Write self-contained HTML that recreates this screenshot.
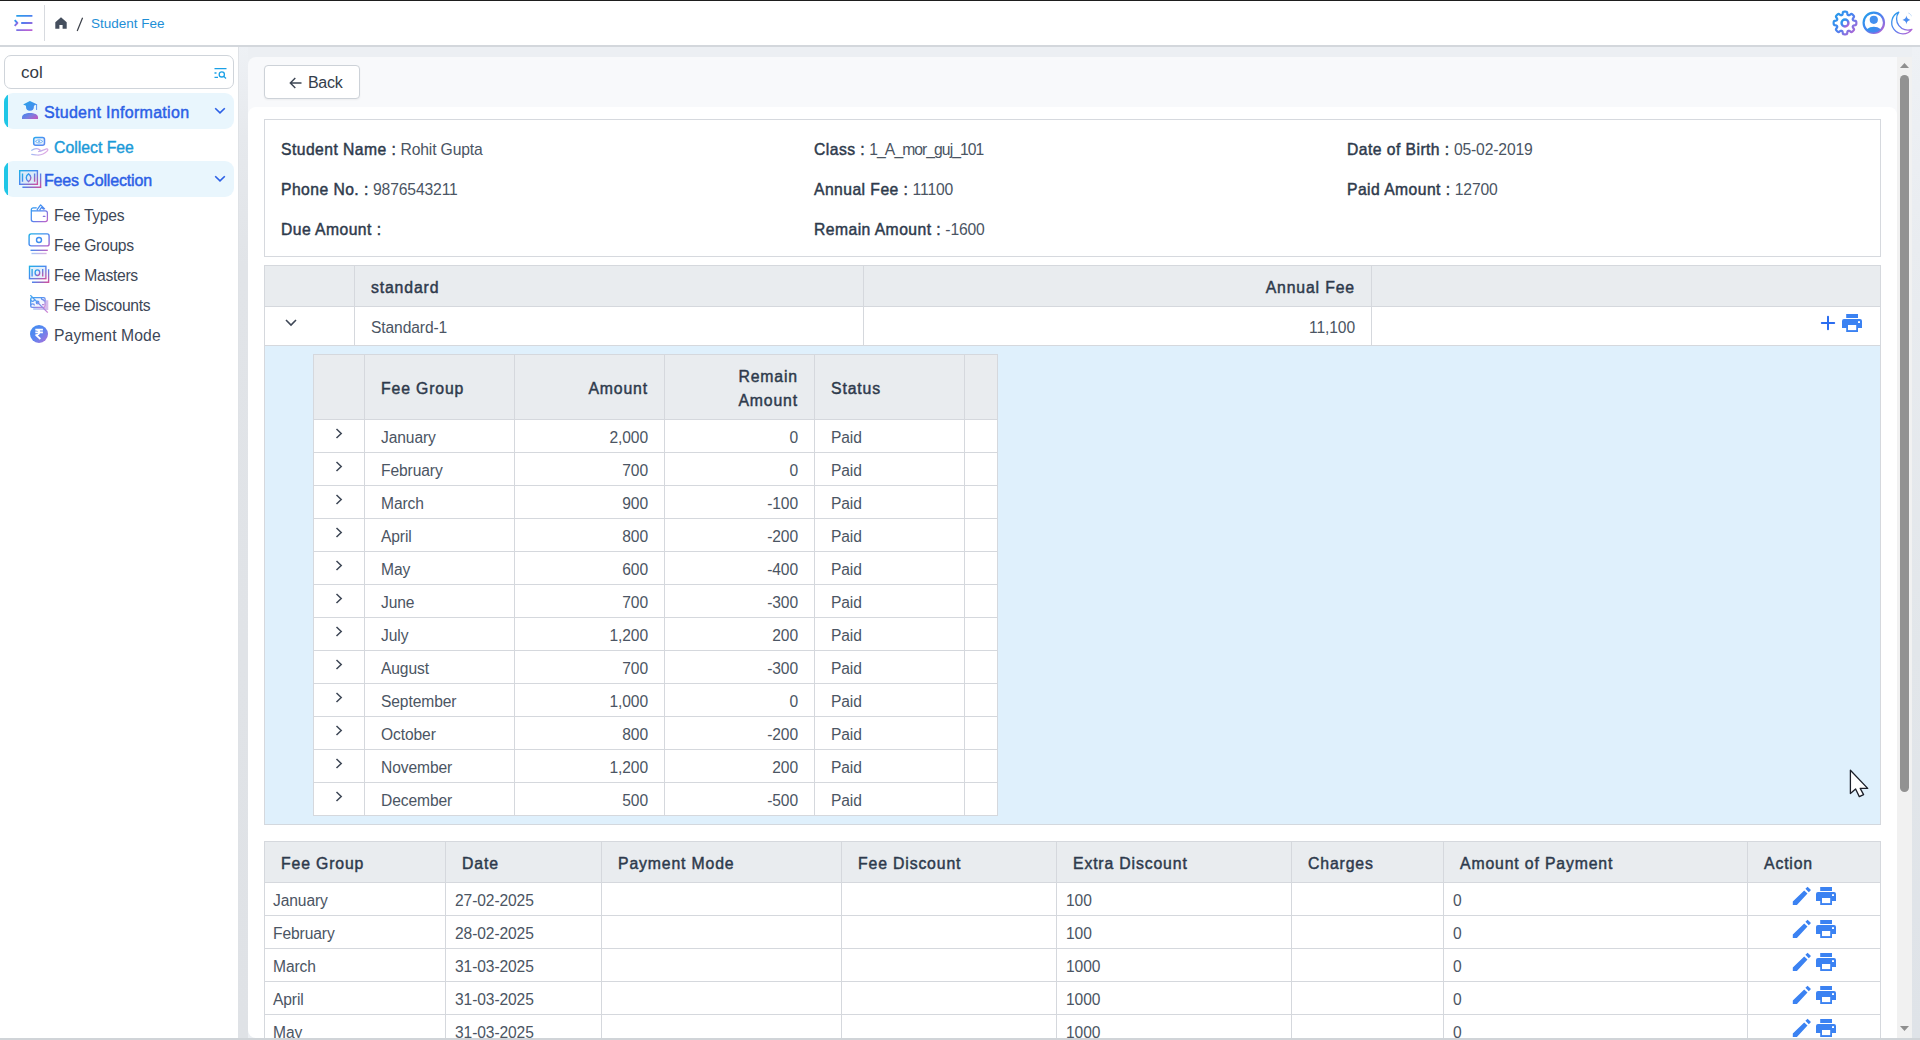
<!DOCTYPE html><html><head><meta charset="utf-8"><style>
*{box-sizing:border-box;margin:0;padding:0}
html,body{width:1920px;height:1040px;overflow:hidden;background:#eceff3;font-family:"Liberation Sans",sans-serif;color:#4b5563;font-size:15px}
.a{position:absolute}
svg{display:block}
#topline{left:0;top:0;width:1920px;height:1px;background:#1e1e1e}
#header{left:0;top:1px;width:1920px;height:44px;background:#fff}
#hborder{left:0;top:45px;width:1920px;height:2px;background:#d3d7dc}
#sidebar{left:0;top:47px;width:238px;height:993px;background:#fff}
#sbline{left:238px;top:47px;width:1px;height:993px;background:#dfe2e6}
#sbshadow{left:239px;top:47px;width:9px;height:993px;background:linear-gradient(180deg,#eef1f5 0px,#e6e9ed 90px,#e1e4e8 220px,#dfe2e6 993px)}
#bottomline{left:0;top:1038px;width:1920px;height:2px;background:#d0d4d8}
.cardhead{left:248px;top:57px;width:1649px;height:60px;background:#f8f9fb;border-radius:8px 0 0 0}
.cardbody{left:248px;top:107px;width:1649px;height:931px;background:#fff;border-radius:8px 8px 0 8px}
.btn{left:264px;top:65px;width:96px;height:34px;border:1px solid #cdd2d8;border-radius:4px;background:#fff;box-shadow:0 1px 2px rgba(0,0,0,.05);font-size:15px;color:#343d4b}
#scroll{left:1897px;top:57px;width:15px;height:981px;background:#f1f1f1}
#thumb{left:3px;top:18px;width:9px;height:717px;background:#929292;border-radius:5px}
#rbg{left:1912px;top:47px;width:8px;height:991px;background:linear-gradient(180deg,#eef1f5 0px,#e9ecf0 200px,#e2e6ea 600px,#dfe3e8 991px)}
.search{left:4px;top:55px;width:230px;height:34px;border:1px solid #cfd4da;border-radius:7px;background:#fff}
.search span{position:absolute;left:16px;top:8px;font-size:17px;line-height:18px;color:#343a44}
.mi{left:4px;width:230px;height:36px;background:#e9f6fd;border-radius:9px;overflow:hidden}
.mi .bar{position:absolute;left:0;top:0;width:4px;height:36px;background:#1fc6e6}
.mt{font-weight:400;-webkit-text-stroke:0.45px #2c60e6;font-size:16px;letter-spacing:0.3px;color:#2c60e6;white-space:nowrap;line-height:18px}
.st{font-size:15.7px;letter-spacing:-0.3px;color:#3d4757;white-space:nowrap;line-height:18px}
.info{left:264px;top:119px;width:1617px;height:138px;border:1px solid #d6d9de;background:#fff}
.kv{white-space:nowrap;font-size:15.7px;letter-spacing:-0.15px;line-height:18px}
.kv b{font-weight:400;-webkit-text-stroke:0.45px #2e3a4c;color:#2e3a4c;letter-spacing:0.45px}
.kv span{color:#4b5563}
table{border-collapse:collapse;table-layout:fixed;position:absolute}
td,th{border:1px solid #d5d8dd;white-space:nowrap;overflow:hidden;font-size:15px}
td{font-size:15.6px;letter-spacing:-0.1px;padding-top:3px}
td{background:#fff;color:#4b5563}
th{background:#e9ecef;font-weight:400;-webkit-text-stroke:0.45px #2e3a4c;color:#2e3a4c;letter-spacing:.85px;text-align:left;font-size:15.8px;padding-top:3px}
.rt{text-align:right}
</style></head><body>
<div id="topline" class="a"></div><div id="header" class="a"></div><div id="hborder" class="a"></div>
<div id="sidebar" class="a"></div><div id="sbline" class="a"></div><div id="sbshadow" class="a"></div>
<div id="rbg" class="a"></div>
<div class="cardhead a"></div><div class="cardbody a"></div>
<div class="a" style="left:14px;top:15px"><svg width="19" height="16" viewBox="0 0 19 16"><defs><linearGradient id="gh" x1="0" y1="0" x2="0.7" y2="1"><stop offset="0" stop-color="#2aa0ea"/><stop offset=".5" stop-color="#4f7df0"/><stop offset="1" stop-color="#b662d6"/></linearGradient></defs>
<g fill="none" stroke="url(#gh)" stroke-width="1.9"><path d="M2.3 0.9 H18.4 M7.2 8 H18.4 M2.3 15.1 H18.4"/><path d="M0.7 5.2 L3.4 8 L0.7 10.8" stroke-linejoin="round"/></g></svg></div>
<div class="a" style="left:44px;top:5px;width:1px;height:36px;background:#d7dadf"></div>
<div class="a" style="left:55px;top:17px"><svg width="12" height="12" viewBox="0 0 12 12"><path d="M6 0.3 L11.7 5.2 V11.7 H7.6 V8 H4.4 V11.7 H0.3 V5.2Z" fill="#454f5e"/></svg></div>
<div class="a" style="left:76px;top:17px"><svg width="8" height="15" viewBox="0 0 8 15"><path d="M6.6 0.8 L1.2 14" stroke="#3a3f48" stroke-width="1.2"/></svg></div>
<div class="a" style="left:91px;top:15px;font-size:13.5px;color:#1e8ed6;line-height:18px">Student Fee</div>
<div class="a" style="left:1832px;top:10px"><svg width="26" height="26" viewBox="0 0 26 26"><defs><linearGradient id="gst" x1="0" y1="0" x2="1" y2="1"><stop offset="0" stop-color="#1ea0ea"/><stop offset=".5" stop-color="#4b82f0"/><stop offset="1" stop-color="#c35fd0"/></linearGradient></defs>
<g fill="none" stroke="url(#gst)" stroke-width="2.2" stroke-linejoin="round"><path d="M13.00 1.65 L13.59 1.67 L14.18 1.73 L14.76 1.92 L15.20 2.67 L15.39 4.09 L15.68 4.77 L16.06 5.03 L16.47 5.20 L16.93 5.29 L17.61 5.01 L18.75 4.14 L19.60 3.92 L20.13 4.19 L20.59 4.57 L21.03 4.97 L21.43 5.41 L21.81 5.87 L22.08 6.40 L21.86 7.25 L20.99 8.39 L20.71 9.07 L20.80 9.53 L20.97 9.94 L21.23 10.32 L21.91 10.61 L23.33 10.80 L24.08 11.24 L24.27 11.82 L24.33 12.41 L24.35 13.00 L24.33 13.59 L24.27 14.18 L24.08 14.76 L23.33 15.20 L21.91 15.39 L21.23 15.68 L20.97 16.06 L20.80 16.47 L20.71 16.93 L20.99 17.61 L21.86 18.75 L22.08 19.60 L21.81 20.13 L21.43 20.59 L21.03 21.03 L20.59 21.43 L20.13 21.81 L19.60 22.08 L18.75 21.86 L17.61 20.99 L16.93 20.71 L16.47 20.80 L16.06 20.97 L15.68 21.23 L15.39 21.91 L15.20 23.33 L14.76 24.08 L14.18 24.27 L13.59 24.33 L13.00 24.35 L12.41 24.33 L11.82 24.27 L11.24 24.08 L10.80 23.33 L10.61 21.91 L10.32 21.23 L9.94 20.97 L9.53 20.80 L9.07 20.71 L8.39 20.99 L7.25 21.86 L6.40 22.08 L5.87 21.81 L5.41 21.43 L4.97 21.03 L4.57 20.59 L4.19 20.13 L3.92 19.60 L4.14 18.75 L5.01 17.61 L5.29 16.93 L5.20 16.47 L5.03 16.06 L4.77 15.68 L4.09 15.39 L2.67 15.20 L1.92 14.76 L1.73 14.18 L1.67 13.59 L1.65 13.00 L1.67 12.41 L1.73 11.82 L1.92 11.24 L2.67 10.80 L4.09 10.61 L4.77 10.32 L5.03 9.94 L5.20 9.53 L5.29 9.07 L5.01 8.39 L4.14 7.25 L3.92 6.40 L4.19 5.87 L4.57 5.41 L4.97 4.97 L5.41 4.57 L5.87 4.19 L6.40 3.92 L7.25 4.14 L8.39 5.01 L9.07 5.29 L9.53 5.20 L9.94 5.03 L10.32 4.77 L10.61 4.09 L10.80 2.67 L11.24 1.92 L11.82 1.73 L12.41 1.67 L13.00 1.65Z"/><circle cx="13" cy="13" r="3.45" stroke-width="2.4"/></g></svg></div>
<div class="a" style="left:1862px;top:11px"><svg width="24" height="24" viewBox="0 0 24 24"><defs><linearGradient id="gu" x1="0" y1="0" x2="1" y2="1"><stop offset="0" stop-color="#1ea0ea"/><stop offset=".5" stop-color="#4b82f0"/><stop offset="1" stop-color="#c35fd0"/></linearGradient></defs>
<defs><clipPath id="cu"><circle cx="11.8" cy="11.8" r="10"/></clipPath></defs>
<circle cx="11.8" cy="11.8" r="10.2" fill="none" stroke="url(#gu)" stroke-width="2.2"/><circle cx="11.8" cy="8.85" r="4.1" fill="#4390ef"/><ellipse cx="11.8" cy="23.2" rx="9.5" ry="7.4" fill="url(#gu)" clip-path="url(#cu)"/></svg></div>
<div class="a" style="left:1889px;top:11px"><svg width="24" height="24" viewBox="0 0 24 24"><defs><linearGradient id="gmo" x1="0" y1="0" x2="1" y2="1"><stop offset="0" stop-color="#1ea0ea"/><stop offset=".5" stop-color="#5a7ff0"/><stop offset="1" stop-color="#c35fd0"/></linearGradient></defs>
<path d="M9.8 1.2 A11.2 11.2 0 1 0 22.9 18.3 A11.2 11.2 0 0 1 9.8 1.2Z" fill="none" stroke="url(#gmo)" stroke-width="1.3" stroke-linejoin="round"/>
<path d="M17.4 4.6 Q17.9 8.4 21.4 8.9 Q17.9 9.4 17.4 13.2 Q16.9 9.4 13.4 8.9 Q16.9 8.4 17.4 4.6Z" fill="#4a8cf0"/><path d="M19.6 2.2 A4.5 4.5 0 0 1 22.6 5.6" fill="none" stroke="#8fc0f4" stroke-width="0.9" stroke-dasharray="1.2 1"/></svg></div>
<div class="search a"><span>col</span><div class="a" style="left:209px;top:12px"><svg width="13" height="11" viewBox="0 0 13 11"><g fill="none" stroke="#1aa0e6" stroke-width="1.3"><path d="M0.5 0.7 H12.5 M0.5 5 H2.5 M0.5 9.4 H4"/><circle cx="7.8" cy="6.4" r="2.6"/><path d="M9.8 8.4 L12 10.5"/></g></svg></div></div>
<div class="mi a" style="top:93px"><div class="bar"></div><div class="a" style="left:18px;top:8px"><svg width="17" height="19" viewBox="0 0 17 19"><defs><linearGradient id="gs" x1="0" y1="0" x2="1" y2="1"><stop offset="0" stop-color="#2aa3e8"/><stop offset="1" stop-color="#4f86f0"/></linearGradient><linearGradient id="gs2" x1="0" y1="0" x2="1" y2="0.6"><stop offset="0" stop-color="#3d85f0"/><stop offset=".6" stop-color="#7a7ee0"/><stop offset="1" stop-color="#b45ec5"/></linearGradient></defs>
<path d="M7.9 0 L14.9 3.3 L11.9 4.8 V5.8 A3.95 3.95 0 0 1 4 5.8 V4.8 L1.1 3.5Z" fill="url(#gs)"/><path d="M14.6 3.4 V8.6" stroke="#4a8af0" stroke-width="0.9" stroke-linecap="round"/>
<path d="M0 18 V16.2 C0 13.6 3.6 12 8 12 C12.4 12 16 13.6 16 16.2 V18Z" fill="url(#gs2)"/></svg></div><div class="a mt" style="left:40px;top:11px">Student Information</div><div class="a" style="left:210px;top:14px"><svg width="12" height="8" viewBox="0 0 12 8"><path d="M1.2 1.2 L6 5.9 L10.8 1.2" fill="none" stroke="#2c60e6" stroke-width="1.6"/></svg></div></div>
<div class="a" style="left:31px;top:136px"><svg width="18" height="20" viewBox="0 0 18 20"><defs><linearGradient id="gc" x1="0" y1="0" x2="1" y2="1"><stop offset="0" stop-color="#2aa8ee"/><stop offset=".5" stop-color="#4f8ef2"/><stop offset="1" stop-color="#5f8cf0"/></linearGradient></defs><defs><linearGradient id="gc2" x1="0" y1="0" x2="1" y2="0.3"><stop offset="0" stop-color="#8fc3f6"/><stop offset=".5" stop-color="#b9b3ee"/><stop offset="1" stop-color="#e0a6e2"/></linearGradient></defs>
<rect x="2.7" y="1.6" width="10.8" height="7.6" rx="2" fill="#e3f0fc" stroke="url(#gc)" stroke-width="1.5"/><path d="M4.4 5.4 Q8.1 2.2 11.8 5.4 Q8.1 8.6 4.4 5.4Z" fill="#fff" stroke="#5aa6f0" stroke-width="0.8"/><circle cx="8.1" cy="5.4" r="1.1" fill="#7db6f2"/>
<g fill="none" stroke="url(#gc2)" stroke-width="1.2" stroke-linecap="round"><path d="M0.8 14.3 C3 12.6 6 12.2 8.6 13.6 C9.6 14.2 9.2 15.6 7.6 15.6"/><path d="M7.8 15.5 C10 15.2 13 13.7 15.4 12.9 C16.9 12.5 17.3 14 16.1 15.2 C13.6 17.8 10 19.3 6 19 C4 18.9 2 18.5 0.8 18.4"/></g></svg></div><div class="a st" style="left:54px;top:139px;color:#1a9ad8;-webkit-text-stroke:0.4px #1a9ad8;font-size:15.8px;letter-spacing:0px">Collect Fee</div>
<div class="mi a" style="top:161px"><div class="bar"></div><div class="a" style="left:15px;top:9px"><svg width="23" height="19" viewBox="0 0 23 19"><defs><linearGradient id="gf" x1="0" y1="0" x2="1" y2="1"><stop offset="0" stop-color="#1fb0e6"/><stop offset=".5" stop-color="#4a86f0"/><stop offset="1" stop-color="#d0509e"/></linearGradient></defs>
<g fill="none" stroke="url(#gf)" stroke-width="1.4"><rect x="0.7" y="0.7" width="17.7" height="13.6" fill="#dcebf9"/><path d="M3.4 17.3 H21.6 V3.5"/><path d="M3.5 3.6 V11.7 M15.6 3.6 V11.7"/><path d="M9.55 3.8 C12.6 5.6 12.6 9.8 9.55 11.6 C6.5 9.8 6.5 5.6 9.55 3.8Z"/></g></svg></div><div class="a mt" style="left:40px;top:11px;letter-spacing:-0.15px">Fees Collection</div><div class="a" style="left:210px;top:14px"><svg width="12" height="8" viewBox="0 0 12 8"><path d="M1.2 1.2 L6 5.9 L10.8 1.2" fill="none" stroke="#2c60e6" stroke-width="1.6"/></svg></div></div>
<div class="a" style="left:30px;top:204px"><svg width="19" height="19" viewBox="0 0 19 19"><defs><linearGradient id="gt" x1="0" y1="0" x2="1" y2="1"><stop offset="0" stop-color="#2a9ff0"/><stop offset=".5" stop-color="#4f86f0"/><stop offset="1" stop-color="#c261c8"/></linearGradient></defs>
<g fill="none" stroke="url(#gt)" stroke-width="1.25" stroke-linecap="round" stroke-linejoin="round"><path d="M1.3 6.9 V15.5 A2 2 0 0 0 3.3 17.5 H15.4 A2 2 0 0 0 17.4 15.5 V8.9 A2 2 0 0 0 15.4 6.9 H1.3 M1.3 6.9 V5.8 A2 2 0 0 1 3.3 3.8 H6.3 M7.2 5.6 L10.6 0.9 L14.6 4.9 M9.9 5.6 L11.6 3.3 L13.4 5.1 M13.3 12.3 H15"/></g></svg></div><div class="a st" style="left:54px;top:207px">Fee Types</div>
<div class="a" style="left:28px;top:232px"><svg width="22" height="23" viewBox="0 0 22 23"><defs><linearGradient id="gg" x1="0" y1="0" x2="1" y2="1"><stop offset="0" stop-color="#1fb0e6"/><stop offset=".5" stop-color="#4a86f0"/><stop offset="1" stop-color="#b75fc8"/></linearGradient></defs><defs><linearGradient id="ggl" gradientUnits="userSpaceOnUse" x1="2" y1="0" x2="20" y2="0"><stop offset="0" stop-color="#3f8ef0"/><stop offset="1" stop-color="#c05fc0"/></linearGradient></defs>
<g fill="none" stroke-width="1.4"><rect x="1.1" y="1.9" width="20" height="12" rx="2" stroke="url(#gg)"/><circle cx="11" cy="8" r="2.5" stroke="#3f8ef0"/><path d="M2.5 18.3 H19.8" stroke="url(#ggl)"/><path d="M3.5 21.5 H18.6" stroke="url(#ggl)" opacity=".5"/></g></svg></div><div class="a st" style="left:54px;top:237px">Fee Groups</div>
<div class="a" style="left:28px;top:265px"><svg width="22" height="19" viewBox="0 0 22 19"><defs><linearGradient id="gm" x1="0" y1="0" x2="1" y2="1"><stop offset="0" stop-color="#1fb0e6"/><stop offset=".5" stop-color="#4a86f0"/><stop offset="1" stop-color="#d0509e"/></linearGradient></defs>
<g fill="none" stroke="url(#gm)" stroke-width="1.35"><rect x="1.5" y="1.3" width="16.4" height="12.4" fill="#e4effb"/><path d="M4 17.2 H20.6 V4.3"/><path d="M4.1 3.9 V11.5 M14.7 3.9 V11.5"/><ellipse cx="9.4" cy="7.7" rx="2.3" ry="2.8"/></g></svg></div><div class="a st" style="left:54px;top:267px">Fee Masters</div>
<div class="a" style="left:30px;top:295px"><svg width="19" height="19" viewBox="0 0 19 19"><defs><linearGradient id="gd" x1="0" y1="0" x2="1" y2="1"><stop offset="0" stop-color="#3fa6f2"/><stop offset=".5" stop-color="#5f8ff0"/><stop offset="1" stop-color="#d77fd0"/></linearGradient></defs><defs><linearGradient id="gd2" gradientUnits="userSpaceOnUse" x1="3" y1="0" x2="18" y2="0"><stop offset="0" stop-color="#a9c4f6"/><stop offset="1" stop-color="#c7a0e4"/></linearGradient></defs>
<path d="M3.2 13.6 H17 V5.2" fill="none" stroke="url(#gd2)" stroke-width="2.6" opacity=".75"/>
<g fill="none" stroke="url(#gd)" stroke-width="1.3"><rect x="0.7" y="2.7" width="14.4" height="9.6" rx="1.4" fill="#f2f6fe"/><path d="M0.7 4.4 A1.8 1.8 0 0 0 2.6 6.3 A1.8 1.8 0 0 0 4.4 4.4 M0.7 10.6 A1.8 1.8 0 0 1 2.6 8.8 A1.8 1.8 0 0 1 4.4 10.6 M11.4 2.7 A1.8 1.8 0 0 0 13.3 4.8 A1.8 1.8 0 0 0 15.1 6 M12 9.6 H14.2"/><circle cx="7.6" cy="7.5" r="1.3"/><path d="M0.3 0.2 L17.8 17.6"/></g></svg></div><div class="a st" style="left:54px;top:297px">Fee Discounts</div>
<div class="a" style="left:30px;top:325px"><svg width="18" height="18" viewBox="0 0 18 18"><defs><linearGradient id="gp" x1="0" y1="0" x2="1" y2="1"><stop offset="0" stop-color="#3f8ef0"/><stop offset=".5" stop-color="#5b85f0"/><stop offset="1" stop-color="#b56ed8"/></linearGradient></defs>
<circle cx="9" cy="9" r="9" fill="url(#gp)"/><g stroke="#fff" stroke-width="1.7" fill="none" stroke-linejoin="round"><path d="M5.3 4.6 H12.9 M5.3 7.4 H12.9 M5.8 4.6 C10.6 4.6 10.6 10 6 10 L10.4 14"/></g></svg></div><div class="a st" style="left:54px;top:327px;letter-spacing:0.1px">Payment Mode</div>
<div class="btn a"><div class="a" style="left:24px;top:11px"><svg width="13" height="12" viewBox="0 0 13 12"><path d="M12.5 6 H1.5 M6.3 1 L1.3 6 L6.3 11" fill="none" stroke="#3c4553" stroke-width="1.4"/></svg></div><div class="a" style="left:43px;top:8px;line-height:18px;font-size:16px;letter-spacing:-0.3px">Back</div></div>
<div class="info a"></div>
<div class="a kv" style="left:281px;top:141px"><b>Student Name :</b> <span>Rohit Gupta</span></div>
<div class="a kv" style="left:814px;top:141px"><b>Class :</b> <span style="letter-spacing:-0.95px">1_A_mor_guj_101</span></div>
<div class="a kv" style="left:1347px;top:141px"><b>Date of Birth :</b> <span>05-02-2019</span></div>
<div class="a kv" style="left:281px;top:181px"><b>Phone No. :</b> <span>9876543211</span></div>
<div class="a kv" style="left:814px;top:181px"><b>Annual Fee :</b> <span>11100</span></div>
<div class="a kv" style="left:1347px;top:181px"><b>Paid Amount :</b> <span>12700</span></div>
<div class="a kv" style="left:281px;top:221px"><b>Due Amount :</b> <span></span></div>
<div class="a kv" style="left:814px;top:221px"><b>Remain Amount :</b> <span>-1600</span></div>
<table style="left:264px;top:265px;width:1616px">
<colgroup><col style="width:90px"><col style="width:509px"><col style="width:508px"><col style="width:509px"></colgroup>
<tr style="height:41px"><th></th><th style="padding-left:16px">standard</th><th class="rt" style="padding-right:16px">Annual Fee</th><th></th></tr>
<tr style="height:39px"><td style="position:relative"></td><td style="padding-left:16px">Standard-1</td><td class="rt" style="padding-right:16px">11,100</td><td></td></tr>
<tr style="height:479px"><td colspan="4" style="background:#dff0fc;border-bottom-color:#d3d8de"></td></tr>
</table>
<div class="a" style="left:285px;top:319px"><svg width="12" height="8" viewBox="0 0 12 8"><path d="M1 1 L6 6 L11 1" fill="none" stroke="#3e4756" stroke-width="1.6"/></svg></div>
<div class="a" style="left:1820px;top:315px"><svg width="16" height="16" viewBox="0 0 16 16"><path d="M8 1.8 V14.2 M1.8 8 H14.2" stroke="#2b6df0" stroke-width="2" stroke-linecap="round"/></svg></div>
<div class="a" style="left:1842px;top:314px"><svg width="20" height="18" viewBox="0 0 20 18"><path d="M4.2 0 H16 V3.9 H4.2Z M2 5 H18 A2 2 0 0 1 20 7 V14 H16 V18 H4.2 V14 H0 V7 A2 2 0 0 1 2 5Z" fill="#3b82f2"/><rect x="6" y="11" width="8.2" height="5.1" fill="#fff"/><rect x="16" y="7.2" width="2" height="1.8" fill="#fff"/></svg></div>
<table style="left:313px;top:354px;width:684px">
<colgroup><col style="width:51px"><col style="width:150px"><col style="width:150px"><col style="width:150px"><col style="width:150px"><col style="width:33px"></colgroup>
<tr style="height:65px"><th></th><th style="padding-left:16px">Fee Group</th><th class="rt" style="padding-right:16px">Amount</th><th class="rt" style="padding-right:16px;white-space:normal;line-height:24px">Remain<br>Amount</th><th style="padding-left:16px">Status</th><th></th></tr>
<tr style="height:33px"><td style="position:relative"></td><td style="padding-left:16px">January</td><td class="rt" style="padding-right:16px">2,000</td><td class="rt" style="padding-right:16px">0</td><td style="padding-left:16px">Paid</td><td></td></tr><tr style="height:33px"><td style="position:relative"></td><td style="padding-left:16px">February</td><td class="rt" style="padding-right:16px">700</td><td class="rt" style="padding-right:16px">0</td><td style="padding-left:16px">Paid</td><td></td></tr><tr style="height:33px"><td style="position:relative"></td><td style="padding-left:16px">March</td><td class="rt" style="padding-right:16px">900</td><td class="rt" style="padding-right:16px">-100</td><td style="padding-left:16px">Paid</td><td></td></tr><tr style="height:33px"><td style="position:relative"></td><td style="padding-left:16px">April</td><td class="rt" style="padding-right:16px">800</td><td class="rt" style="padding-right:16px">-200</td><td style="padding-left:16px">Paid</td><td></td></tr><tr style="height:33px"><td style="position:relative"></td><td style="padding-left:16px">May</td><td class="rt" style="padding-right:16px">600</td><td class="rt" style="padding-right:16px">-400</td><td style="padding-left:16px">Paid</td><td></td></tr><tr style="height:33px"><td style="position:relative"></td><td style="padding-left:16px">June</td><td class="rt" style="padding-right:16px">700</td><td class="rt" style="padding-right:16px">-300</td><td style="padding-left:16px">Paid</td><td></td></tr><tr style="height:33px"><td style="position:relative"></td><td style="padding-left:16px">July</td><td class="rt" style="padding-right:16px">1,200</td><td class="rt" style="padding-right:16px">200</td><td style="padding-left:16px">Paid</td><td></td></tr><tr style="height:33px"><td style="position:relative"></td><td style="padding-left:16px">August</td><td class="rt" style="padding-right:16px">700</td><td class="rt" style="padding-right:16px">-300</td><td style="padding-left:16px">Paid</td><td></td></tr><tr style="height:33px"><td style="position:relative"></td><td style="padding-left:16px">September</td><td class="rt" style="padding-right:16px">1,000</td><td class="rt" style="padding-right:16px">0</td><td style="padding-left:16px">Paid</td><td></td></tr><tr style="height:33px"><td style="position:relative"></td><td style="padding-left:16px">October</td><td class="rt" style="padding-right:16px">800</td><td class="rt" style="padding-right:16px">-200</td><td style="padding-left:16px">Paid</td><td></td></tr><tr style="height:33px"><td style="position:relative"></td><td style="padding-left:16px">November</td><td class="rt" style="padding-right:16px">1,200</td><td class="rt" style="padding-right:16px">200</td><td style="padding-left:16px">Paid</td><td></td></tr><tr style="height:33px"><td style="position:relative"></td><td style="padding-left:16px">December</td><td class="rt" style="padding-right:16px">500</td><td class="rt" style="padding-right:16px">-500</td><td style="padding-left:16px">Paid</td><td></td></tr></table>
<div class="a" style="left:335px;top:428px"><svg width="8" height="11" viewBox="0 0 8 11"><path d="M1.5 1 L6.2 5.5 L1.5 10" fill="none" stroke="#3e4756" stroke-width="1.5"/></svg></div>
<div class="a" style="left:335px;top:461px"><svg width="8" height="11" viewBox="0 0 8 11"><path d="M1.5 1 L6.2 5.5 L1.5 10" fill="none" stroke="#3e4756" stroke-width="1.5"/></svg></div>
<div class="a" style="left:335px;top:494px"><svg width="8" height="11" viewBox="0 0 8 11"><path d="M1.5 1 L6.2 5.5 L1.5 10" fill="none" stroke="#3e4756" stroke-width="1.5"/></svg></div>
<div class="a" style="left:335px;top:527px"><svg width="8" height="11" viewBox="0 0 8 11"><path d="M1.5 1 L6.2 5.5 L1.5 10" fill="none" stroke="#3e4756" stroke-width="1.5"/></svg></div>
<div class="a" style="left:335px;top:560px"><svg width="8" height="11" viewBox="0 0 8 11"><path d="M1.5 1 L6.2 5.5 L1.5 10" fill="none" stroke="#3e4756" stroke-width="1.5"/></svg></div>
<div class="a" style="left:335px;top:593px"><svg width="8" height="11" viewBox="0 0 8 11"><path d="M1.5 1 L6.2 5.5 L1.5 10" fill="none" stroke="#3e4756" stroke-width="1.5"/></svg></div>
<div class="a" style="left:335px;top:626px"><svg width="8" height="11" viewBox="0 0 8 11"><path d="M1.5 1 L6.2 5.5 L1.5 10" fill="none" stroke="#3e4756" stroke-width="1.5"/></svg></div>
<div class="a" style="left:335px;top:659px"><svg width="8" height="11" viewBox="0 0 8 11"><path d="M1.5 1 L6.2 5.5 L1.5 10" fill="none" stroke="#3e4756" stroke-width="1.5"/></svg></div>
<div class="a" style="left:335px;top:692px"><svg width="8" height="11" viewBox="0 0 8 11"><path d="M1.5 1 L6.2 5.5 L1.5 10" fill="none" stroke="#3e4756" stroke-width="1.5"/></svg></div>
<div class="a" style="left:335px;top:725px"><svg width="8" height="11" viewBox="0 0 8 11"><path d="M1.5 1 L6.2 5.5 L1.5 10" fill="none" stroke="#3e4756" stroke-width="1.5"/></svg></div>
<div class="a" style="left:335px;top:758px"><svg width="8" height="11" viewBox="0 0 8 11"><path d="M1.5 1 L6.2 5.5 L1.5 10" fill="none" stroke="#3e4756" stroke-width="1.5"/></svg></div>
<div class="a" style="left:335px;top:791px"><svg width="8" height="11" viewBox="0 0 8 11"><path d="M1.5 1 L6.2 5.5 L1.5 10" fill="none" stroke="#3e4756" stroke-width="1.5"/></svg></div>
<table style="left:264px;top:841px;width:1616px">
<colgroup><col style="width:181px"><col style="width:156px"><col style="width:240px"><col style="width:215px"><col style="width:235px"><col style="width:152px"><col style="width:304px"><col style="width:133px"></colgroup>
<tr style="height:41px"><th style="padding-left:16px">Fee Group</th><th style="padding-left:16px">Date</th><th style="padding-left:16px">Payment Mode</th><th style="padding-left:16px">Fee Discount</th><th style="padding-left:16px">Extra Discount</th><th style="padding-left:16px">Charges</th><th style="padding-left:16px">Amount of Payment</th><th style="padding-left:16px">Action</th></tr>
<tr style="height:33px"><td style="padding-left:8px;">January</td><td style="padding-left:9px;">27-02-2025</td><td></td><td></td><td style="padding-left:9px;">100</td><td></td><td style="padding-left:9px;">0</td><td></td></tr><tr style="height:33px"><td style="padding-left:8px;">February</td><td style="padding-left:9px;">28-02-2025</td><td></td><td></td><td style="padding-left:9px;">100</td><td></td><td style="padding-left:9px;">0</td><td></td></tr><tr style="height:33px"><td style="padding-left:8px;">March</td><td style="padding-left:9px;">31-03-2025</td><td></td><td></td><td style="padding-left:9px;">1000</td><td></td><td style="padding-left:9px;">0</td><td></td></tr><tr style="height:33px"><td style="padding-left:8px;">April</td><td style="padding-left:9px;">31-03-2025</td><td></td><td></td><td style="padding-left:9px;">1000</td><td></td><td style="padding-left:9px;">0</td><td></td></tr><tr style="height:33px"><td style="padding-left:8px;">May</td><td style="padding-left:9px;">31-03-2025</td><td></td><td></td><td style="padding-left:9px;">1000</td><td></td><td style="padding-left:9px;">0</td><td></td></tr></table>
<div class="a" style="left:1792px;top:886px"><svg width="20" height="20" viewBox="0 0 20 20"><path d="M0.8 15.5 L12.2 4.4 L15.5 7.6 L4.9 19 H0.8Z M13.4 2.8 L15.6 0.7 L19 4.1 L16.8 6.3Z" fill="#3b82f2"/></svg></div><div class="a" style="left:1816px;top:887px"><svg width="20" height="18" viewBox="0 0 20 18"><path d="M4.2 0 H16 V3.9 H4.2Z M2 5 H18 A2 2 0 0 1 20 7 V14 H16 V18 H4.2 V14 H0 V7 A2 2 0 0 1 2 5Z" fill="#3b82f2"/><rect x="6" y="11" width="8.2" height="5.1" fill="#fff"/><rect x="16" y="7.2" width="2" height="1.8" fill="#fff"/></svg></div>
<div class="a" style="left:1792px;top:919px"><svg width="20" height="20" viewBox="0 0 20 20"><path d="M0.8 15.5 L12.2 4.4 L15.5 7.6 L4.9 19 H0.8Z M13.4 2.8 L15.6 0.7 L19 4.1 L16.8 6.3Z" fill="#3b82f2"/></svg></div><div class="a" style="left:1816px;top:920px"><svg width="20" height="18" viewBox="0 0 20 18"><path d="M4.2 0 H16 V3.9 H4.2Z M2 5 H18 A2 2 0 0 1 20 7 V14 H16 V18 H4.2 V14 H0 V7 A2 2 0 0 1 2 5Z" fill="#3b82f2"/><rect x="6" y="11" width="8.2" height="5.1" fill="#fff"/><rect x="16" y="7.2" width="2" height="1.8" fill="#fff"/></svg></div>
<div class="a" style="left:1792px;top:952px"><svg width="20" height="20" viewBox="0 0 20 20"><path d="M0.8 15.5 L12.2 4.4 L15.5 7.6 L4.9 19 H0.8Z M13.4 2.8 L15.6 0.7 L19 4.1 L16.8 6.3Z" fill="#3b82f2"/></svg></div><div class="a" style="left:1816px;top:953px"><svg width="20" height="18" viewBox="0 0 20 18"><path d="M4.2 0 H16 V3.9 H4.2Z M2 5 H18 A2 2 0 0 1 20 7 V14 H16 V18 H4.2 V14 H0 V7 A2 2 0 0 1 2 5Z" fill="#3b82f2"/><rect x="6" y="11" width="8.2" height="5.1" fill="#fff"/><rect x="16" y="7.2" width="2" height="1.8" fill="#fff"/></svg></div>
<div class="a" style="left:1792px;top:985px"><svg width="20" height="20" viewBox="0 0 20 20"><path d="M0.8 15.5 L12.2 4.4 L15.5 7.6 L4.9 19 H0.8Z M13.4 2.8 L15.6 0.7 L19 4.1 L16.8 6.3Z" fill="#3b82f2"/></svg></div><div class="a" style="left:1816px;top:986px"><svg width="20" height="18" viewBox="0 0 20 18"><path d="M4.2 0 H16 V3.9 H4.2Z M2 5 H18 A2 2 0 0 1 20 7 V14 H16 V18 H4.2 V14 H0 V7 A2 2 0 0 1 2 5Z" fill="#3b82f2"/><rect x="6" y="11" width="8.2" height="5.1" fill="#fff"/><rect x="16" y="7.2" width="2" height="1.8" fill="#fff"/></svg></div>
<div class="a" style="left:1792px;top:1018px"><svg width="20" height="20" viewBox="0 0 20 20"><path d="M0.8 15.5 L12.2 4.4 L15.5 7.6 L4.9 19 H0.8Z M13.4 2.8 L15.6 0.7 L19 4.1 L16.8 6.3Z" fill="#3b82f2"/></svg></div><div class="a" style="left:1816px;top:1019px"><svg width="20" height="18" viewBox="0 0 20 18"><path d="M4.2 0 H16 V3.9 H4.2Z M2 5 H18 A2 2 0 0 1 20 7 V14 H16 V18 H4.2 V14 H0 V7 A2 2 0 0 1 2 5Z" fill="#3b82f2"/><rect x="6" y="11" width="8.2" height="5.1" fill="#fff"/><rect x="16" y="7.2" width="2" height="1.8" fill="#fff"/></svg></div>
<div id="scroll" class="a"><div id="thumb" class="a"></div><svg class="a" style="left:3px;top:6px" width="9" height="5" viewBox="0 0 9 5"><path d="M0 5 L4.5 0 L9 5Z" fill="#8f8f8f"/></svg><svg class="a" style="left:3px;top:969px" width="9" height="5" viewBox="0 0 9 5"><path d="M0 0 L4.5 5 L9 0Z" fill="#8f8f8f"/></svg></div>
<div id="bottomline" class="a"></div>
<div class="a" style="left:1849px;top:769px"><svg width="21" height="30" viewBox="0 0 21 30"><path d="M1.4 1.2 V24.5 L6.6 20 L10.3 27.6 L14.6 25.6 L11.2 19.4 H18.7Z" fill="#fff" stroke="#1b1f29" stroke-width="1.3" stroke-linejoin="round"/></svg></div>
</body></html>
